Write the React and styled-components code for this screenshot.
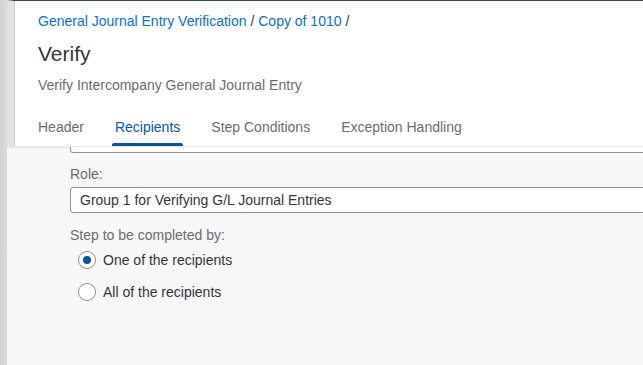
import styled, { createGlobalStyle } from "styled-components";

const GlobalStyle = createGlobalStyle`
  html, body {
    margin: 0;
    padding: 0;
    overflow: hidden;
    background: #f7f7f7;
  }
  body {
    font-family: "Liberation Sans", Arial, sans-serif;
  }
`;

const Page = styled.div`
  display: flex;
  width: 643px;
  height: 365px;
  overflow: hidden;
`;

const Rail = styled.div`
  width: 7px;
  flex-shrink: 0;
  background: linear-gradient(to right, #d2d2d2, #dcdcdc);
`;

const Main = styled.div`
  flex: 1;
  display: flex;
  flex-direction: column;
  min-width: 0;
`;

const Header = styled.header`
  background: #fff;
  border-top: 1px solid #354a5f;
  border-left: 7px solid #e3e3e3;
  padding: 10px 0 0 24px;
  box-shadow: inset 1px 0 0 #d0d0d0;
`;

const Breadcrumb = styled.div`
  font-size: 14px;
  line-height: 20px;
  color: #32363a;
`;

const Crumb = styled.span`
  color: #0a6ed1;
`;

const Title = styled.h1`
  margin: 9px 0 0;
  font-size: 21px;
  font-weight: normal;
  line-height: 28px;
  color: #32363a;
`;

const Subtitle = styled.div`
  margin-top: 7px;
  font-size: 14px;
  line-height: 20px;
  color: #6a6d70;
`;

const TabBar = styled.nav`
  display: flex;
  gap: 31px;
  margin-top: 12px;
  margin-left: -24px;
  padding-left: 24px;
  height: 39px;
  border-bottom: 1px solid #e5e5e5;
`;

const Tab = styled.div`
  position: relative;
  display: flex;
  align-items: center;
  font-size: 14px;
  color: ${(p) => (p.$active ? "#0854a0" : "#6a6d70")};

  &::after {
    content: "";
    display: ${(p) => (p.$active ? "block" : "none")};
    position: absolute;
    left: -3px;
    right: -3px;
    bottom: 0;
    height: 3px;
    border-radius: 2px 2px 0 0;
    background: #0854a0;
  }
`;

const Content = styled.section`
  flex: 1;
  background: #f7f7f7;
  padding-left: 63px;
  box-shadow: inset 0 2px 2px -1px rgba(0, 0, 0, 0.08);
`;

const InputStub = styled.div`
  height: 5px;
  margin-right: -10px;
  border: 1px solid #89919a;
  border-top: none;
  border-radius: 0 0 3px 3px;
  background: #fff;
`;

const Label = styled.div`
  margin-top: ${(p) => p.$top}px;
  font-size: 14px;
  line-height: 20px;
  color: #6a6d70;
`;

const Input = styled.div`
  margin-top: 3px;
  margin-right: -10px;
  height: 24px;
  display: flex;
  align-items: center;
  padding-left: 9px;
  border: 1px solid #89919a;
  border-radius: 3px;
  background: #fff;
  font-size: 14px;
  color: #32363a;
`;

const RadioGroup = styled.div`
  margin-top: -1px;
`;

const RadioRow = styled.label`
  display: flex;
  align-items: center;
  gap: 7px;
  height: 32px;
  padding-left: 8px;
  font-size: 14px;
  color: #32363a;
`;

const RadioCircle = styled.span`
  width: 18px;
  height: 18px;
  box-sizing: border-box;
  border: 1px solid #89919a;
  border-radius: 50%;
  background: #fff;
  display: flex;
  align-items: center;
  justify-content: center;

  &::after {
    content: "";
    display: ${(p) => (p.$checked ? "block" : "none")};
    width: 8px;
    height: 8px;
    border-radius: 50%;
    background: #0854a0;
  }
`;

const tabs = ["Header", "Recipients", "Step Conditions", "Exception Handling"];

export default function App() {
  return (
    <Page>
      <GlobalStyle />
      <Rail />
      <Main>
        <Header>
          <Breadcrumb>
            <Crumb>General Journal Entry Verification</Crumb> /{" "}
            <Crumb>Copy of 1010</Crumb> /
          </Breadcrumb>
          <Title>Verify</Title>
          <Subtitle>Verify Intercompany General Journal Entry</Subtitle>
          <TabBar>
            {tabs.map((t) => (
              <Tab key={t} $active={t === "Recipients"}>
                {t}
              </Tab>
            ))}
          </TabBar>
        </Header>
        <Content>
          <InputStub />
          <Label $top={11}>Role:</Label>
          <Input>Group 1 for Verifying G/L Journal Entries</Input>
          <Label $top={12}>Step to be completed by:</Label>
          <RadioGroup>
            <RadioRow>
              <RadioCircle $checked />
              One of the recipients
            </RadioRow>
            <RadioRow>
              <RadioCircle />
              All of the recipients
            </RadioRow>
          </RadioGroup>
        </Content>
      </Main>
    </Page>
  );
}
